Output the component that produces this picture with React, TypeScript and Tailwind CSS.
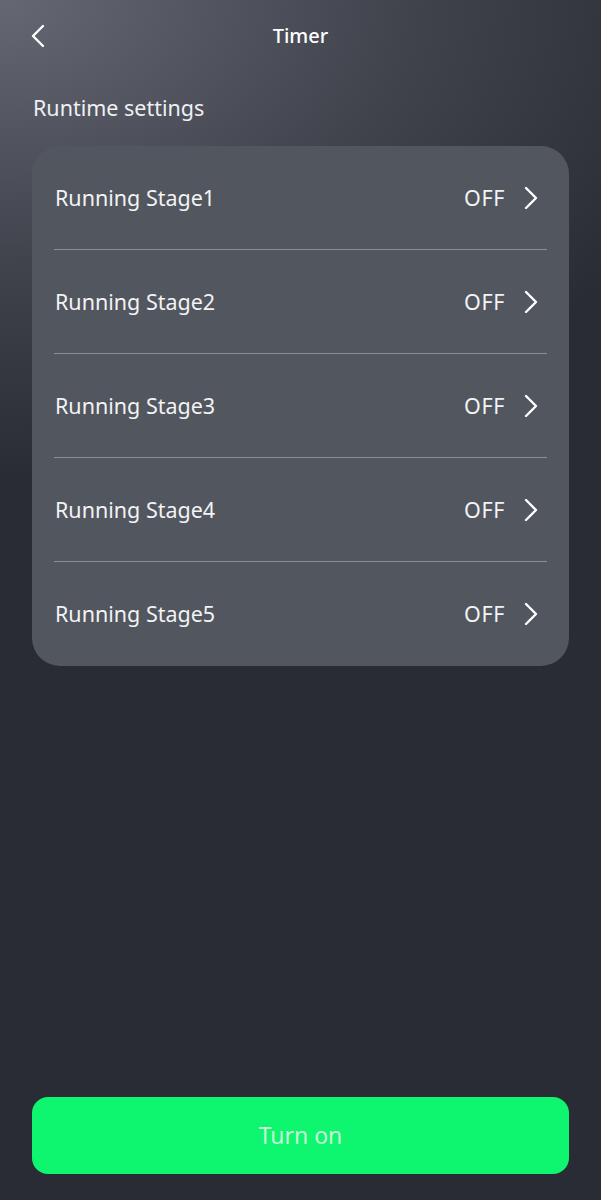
const stages = ['Running Stage1', 'Running Stage2', 'Running Stage3', 'Running Stage4', 'Running Stage5'];

function Chevron({ dir = 'right' }: { dir?: 'left' | 'right' }) {
  return (
    <svg width="16" height="24" viewBox="0 0 16 24" fill="none" stroke="currentColor" strokeWidth="2.4" strokeLinecap="round" strokeLinejoin="round">
      {dir === 'right' ? <path d="M3 2 L13 12 L3 22" /> : <path d="M13 2 L3 12 L13 22" />}
    </svg>
  );
}

export default function App() {
  return (
    <div
      className="flex h-[1200px] w-[601px] flex-col bg-[radial-gradient(ellipse_125%_40%_at_0%_0%,#656873_0%,#40434c_55%,#292c34_100%)] text-white"
      style={{ fontFamily: '"Noto Sans", Roboto, sans-serif' }}
    >
      <header className="relative flex h-[72px] items-center justify-center">
        <button className="absolute left-[30px] top-[24px] text-white">
          <Chevron dir="left" />
        </button>
        <h1 className="text-[20px] font-medium">Timer</h1>
      </header>

      <p className="mt-[20px] px-[33px] text-[21.5px] text-[#eef0f2]">Runtime settings</p>

      <div className="mx-[32px] mt-[22px] rounded-[28px] bg-[#52565e] px-[22px]">
        {stages.map((s, i) => (
          <div
            key={s}
            className={`flex h-[104px] items-center justify-between ${i < stages.length - 1 ? 'border-b border-[#8a8d93]' : ''}`}
          >
            <span className="pl-[1px] text-[21.5px] text-[#f2f3f5]">{s}</span>
            <span className="flex items-center gap-[18px] pr-[8px]">
              <span className="text-[21.5px] tracking-[0.6px] text-[#f2f3f5]">OFF</span>
              <Chevron />
            </span>
          </div>
        ))}
      </div>

      <div className="flex-1" />

      <div className="px-[32px] pb-[26px]">
        <button className="flex h-[77px] w-full items-center justify-center rounded-[16px] bg-[#0ef56f] text-[23px] text-[#c6f5d6]">
          Turn on
        </button>
      </div>
    </div>
  );
}
